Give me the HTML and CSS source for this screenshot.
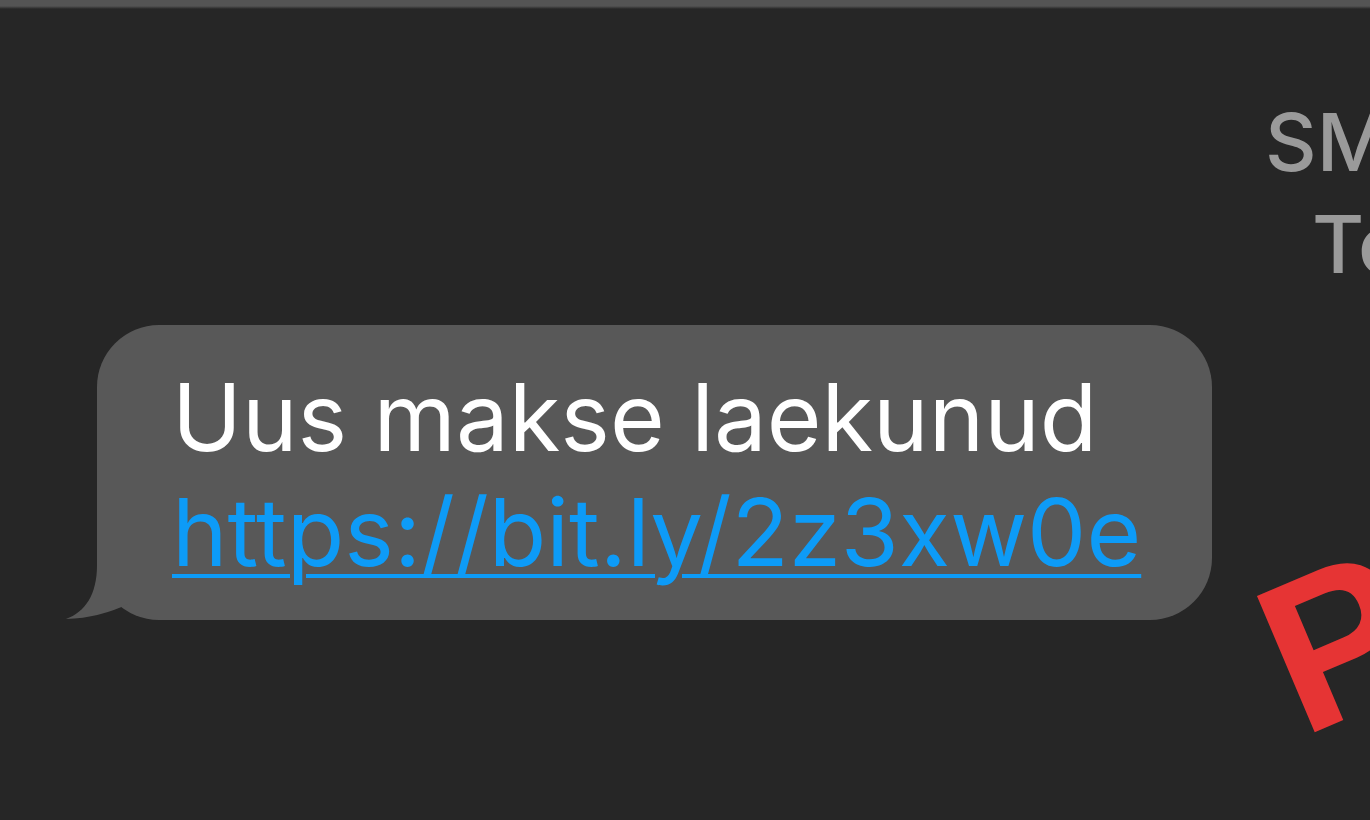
FILE: index.html
```html
<!DOCTYPE html>
<html>
<head>
<meta charset="utf-8">
<link rel="stylesheet" href="styles.css">
</head>
<body>
    <div class="topbar"></div>

    <main class="thread">
        <header class="meta">
            <div>SMS Message</div>
            <div class="meta_time">Today 12:45</div>
        </header>

        <div class="bubble">
            <svg class="tail" width="80" height="95" viewBox="0 0 80 95">
                <path d="M37 10 L37 35 C37 65 25 82 6 89 Q40 88 70 73 L70 10 Z" fill="#585858"/>
            </svg>
            <p class="msg_text">Uus makse laekunud</p>
            <a class="msg_link" href="#">https://bit.ly/2z3xw0e</a>
        </div>
    </main>

    <span class="stamp">PETTUS</span>
</body>
</html>
```

FILE: styles.css
```css
html, body{
    margin: 0;
    height: 100%;
}

body{
    background-color: #262626;
    font-family: Inter, "Liberation Sans", Arial, sans-serif;
    overflow: hidden;
    position: relative;
}

.topbar{
    height: 9px;
    background: linear-gradient(#545454 0, #545454 6px, #262626 9px);
}

.thread{
    display: flex;
    flex-direction: column;
    align-items: flex-start;
}

/* cabeçalho da conversa, cortado pela margem direita */
.meta{
    width: 560px;
    flex-shrink: 0;
    margin: 82px 0 0 1258px;
    font-size: 80px;
    font-weight: 500;
    line-height: 102px;
    text-align: center;
    color: #9a9a9a;
    white-space: nowrap;
}

.meta_time{
    padding-left: 12px;
}

.bubble{
    position: relative;
    box-sizing: border-box;
    width: 1115px;
    margin: 30px 0 0 97px;
    padding: 35px 40px 30px 75px;
    background-color: #585858;
    border-radius: 62px;
    font-size: 94px;
    line-height: 115px;
}

.tail{
    position: absolute;
    left: -37px;
    bottom: -5px;
}

.msg_text{
    position: relative;
    margin: 0;
    color: #ffffff;
    white-space: nowrap;
}

.msg_link{
    position: relative;
    display: block;
    color: #0d9bf7;
    white-space: nowrap;
    text-decoration: underline;
    text-decoration-thickness: 4px;
    text-underline-offset: 8px;
}

.stamp{
    position: absolute;
    left: 1239px;
    top: 562px;
    font-family: "Liberation Sans", Arial, sans-serif;
    font-size: 215px;
    line-height: 215px;
    font-weight: bold;
    color: #e63434;
    white-space: nowrap;
    transform-origin: 16px 25px;
    transform: rotate(-23deg);
}
```
